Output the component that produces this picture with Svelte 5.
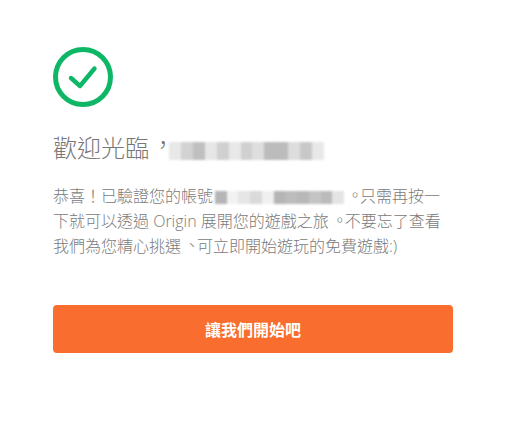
<script>
  // grey levels of the pixelated e-mail, left to right
  const headingBlur = ['#e8e8e8', '#d2d2d2', '#bfbfbf', '#e6e6e6', '#d0d0d0', '#e8e8e8', '#d0d0d0', '#dedede', '#bcbcbc', '#bcbcbc', '#dddddd', '#c8c8c8', '#e8e8e8']
  const bodyBlur = ['#b5b5b5', '#f2f2f2', '#e6e6e6', '#dadada', '#f0f0f0', '#b5b5b5', '#bcbcbc', '#b8b8b8', '#c4c4c4', '#bbbbbb', '#e4e4e4']
</script>

<main class="page" lang="zh-TW">
  <svg class="check" viewBox="0 0 60 60" width="60" height="60" fill="none" stroke="#0db766" aria-hidden="true">
    <circle cx="30" cy="30" r="27.5" stroke-width="5" />
    <path d="M18 31 L27 39 L41.5 21.5" stroke-width="4.4" stroke-linecap="round" stroke-linejoin="round" />
  </svg>

  <h1 class="title">
    歡迎光臨<span class="punct">，</span><span class="blur big">{#each headingBlur as c}<i style="background:{c}"></i>{/each}</span>
  </h1>

  <p class="message">恭喜！已驗證您的帳號<span class="blur small">{#each bodyBlur as c}<i style="background:{c}"></i>{/each}</span><span class="punct">。</span>只需再按一下就可以透過 Origin 展開您的遊戲之旅<span class="punct">。</span>不要忘了查看我們為您精心挑選<span class="punct">、</span>可立即開始遊玩的免費遊戲:)</p>

  <button class="start">讓我們開始吧</button>
</main>

<style>
  :global(body) {
    background: #fff;
  }

  .page {
    box-sizing: border-box;
    width: 519px;
    height: 431px;
    padding: 47px 0 0 53px;
    font-family: "Open Sans", "Noto Sans CJK TC", sans-serif;
  }

  .check {
    display: block;
  }

  .title {
    margin: 24px 0 0;
    width: 400px;
    font-size: 24px;
    font-weight: 300;
    line-height: 34px;
    color: #777;
    white-space: nowrap;
  }

  .message {
    margin: 19px 0 0;
    width: 400px;
    font-size: 16px;
    font-weight: 300;
    line-height: 25px;
    color: #7a7a7a;
  }

  .punct {
    display: inline-block;
    transform: translate(0.18em, -0.05em);
  }

  .title .punct {
    transform: translate(0.08em, -0.12em);
  }

  .blur {
    display: inline-flex;
    vertical-align: middle;
    filter: blur(1px);
  }

  .blur i {
    flex: 1;
  }

  .blur.big {
    width: 155px;
    height: 18px;
    margin-left: -4px;
  }

  .blur.small {
    width: 129px;
    height: 13px;
    margin-left: 2px;
  }

  .start {
    display: block;
    margin-top: 46px;
    width: 400px;
    height: 48px;
    border: none;
    border-radius: 4px;
    background: #f96d2e;
    color: #fff;
    font-family: inherit;
    font-size: 16px;
    font-weight: 700;
    cursor: pointer;
  }
</style>
